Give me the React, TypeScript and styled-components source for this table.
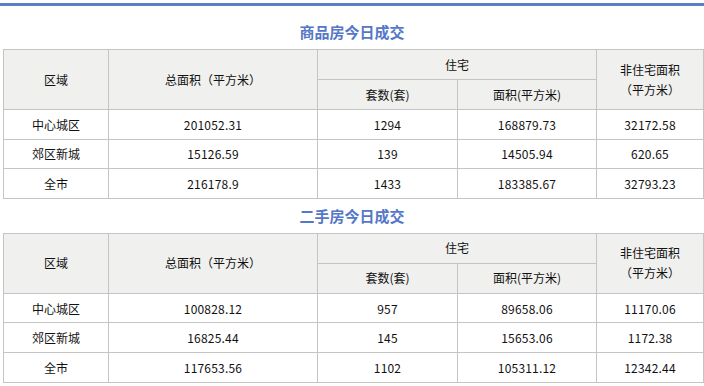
import styled, { createGlobalStyle } from 'styled-components';

const GlobalStyle = createGlobalStyle`
    body {
        margin: 0;
        background: #fff;
        font-family: "Noto Sans CJK SC", "Noto Sans", sans-serif;
    }
`;

const Page = styled.div`
    width: 704px;
    padding-top: 3px;
`;

const TopBar = styled.div`
    height: 3px;
    background: #5a7ec8;
    margin-bottom: 17px;
`;

const Title = styled.h3`
    margin: 8px 0;
    height: 18px;
    line-height: 18px;
    text-align: center;
    font-size: 15px;
    font-weight: bold;
    color: #5577c8;
`;

const Table = styled.table`
    margin-left: 3px;
    width: 700px;
    border-collapse: collapse;
    table-layout: fixed;
    font-size: 12px;
    color: #111;
`;

const Th = styled.th`
    background: #f0f0ee;
    border: 1px solid #c4c4c4;
    font-weight: normal;
    height: 29px;
    padding: 0;
    text-align: center;
    line-height: 20px;
`;

const Td = styled.td<{ $num?: boolean }>`
    border: 1px solid #c4c4c4;
    height: 28.6px;
    padding: 0;
    text-align: center;
    ${p => p.$num && 'letter-spacing: 0.2px;'}
`;

type Row = [string, string, string, string, string];

const commercial: Row[] = [
    ['中心城区', '201052.31', '1294', '168879.73', '32172.58'],
    ['郊区新城', '15126.59', '139', '14505.94', '620.65'],
    ['全市', '216178.9', '1433', '183385.67', '32793.23'],
];

const secondHand: Row[] = [
    ['中心城区', '100828.12', '957', '89658.06', '11170.06'],
    ['郊区新城', '16825.44', '145', '15653.06', '1172.38'],
    ['全市', '117653.56', '1102', '105311.12', '12342.44'],
];

const DealTable = ({ rows }: { rows: Row[] }) => (
    <Table>
        <colgroup>
            <col style={{ width: 105 }} />
            <col style={{ width: 209 }} />
            <col style={{ width: 140 }} />
            <col style={{ width: 139 }} />
            <col style={{ width: 107 }} />
        </colgroup>
        <thead>
            <tr>
                <Th rowSpan={2}>区域</Th>
                <Th rowSpan={2}>总面积（平方米）</Th>
                <Th colSpan={2}>住宅</Th>
                <Th rowSpan={2}>非住宅面积<br />（平方米）</Th>
            </tr>
            <tr>
                <Th>套数(套)</Th>
                <Th>面积(平方米)</Th>
            </tr>
        </thead>
        <tbody>
            {rows.map(r => (
                <tr key={r[0]}>
                    <Td>{r[0]}</Td>
                    <Td $num>{r[1]}</Td>
                    <Td $num>{r[2]}</Td>
                    <Td $num>{r[3]}</Td>
                    <Td $num>{r[4]}</Td>
                </tr>
            ))}
        </tbody>
    </Table>
);

const App = () => {
    return (
        <Page>
            <GlobalStyle />
            <TopBar />
            <Title>商品房今日成交</Title>
            <DealTable rows={commercial} />
            <Title>二手房今日成交</Title>
            <DealTable rows={secondHand} />
        </Page>
    );
};

export default App;
